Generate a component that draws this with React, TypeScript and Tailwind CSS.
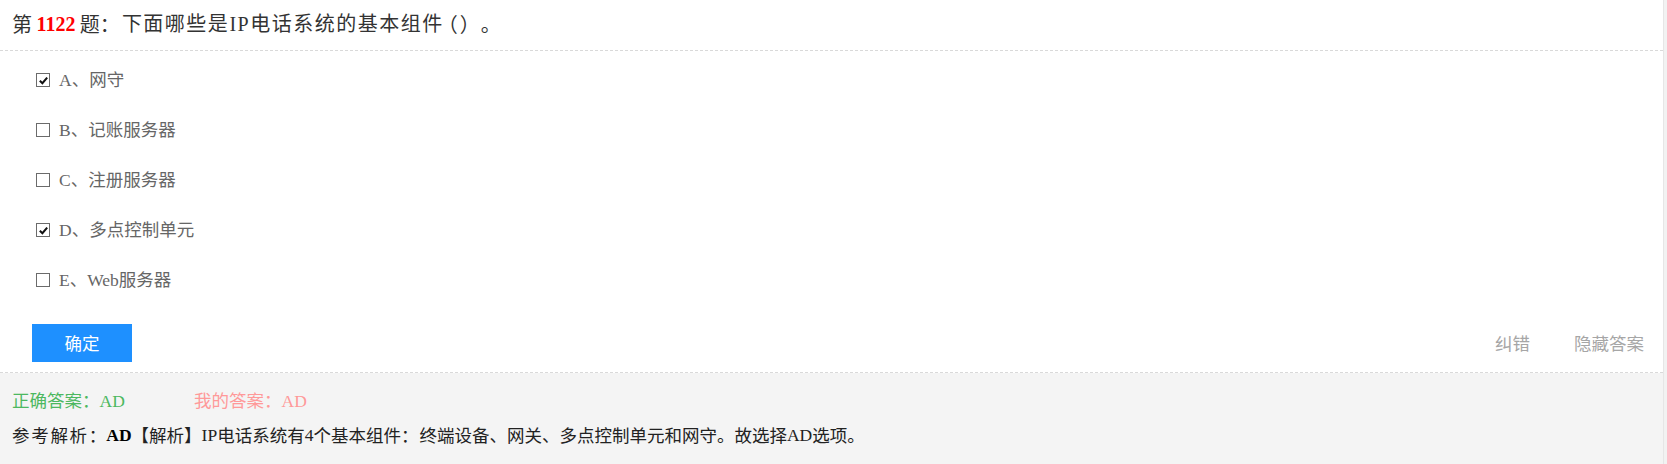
const serifCjk = "font-['Liberation_Serif','Noto_Sans_CJK_SC',serif]"
const cjk = "font-['Noto_Sans_CJK_SC',sans-serif]"
const latin = "font-['Liberation_Serif',serif]"

const options = [
  { key: 'A', text: '网守', checked: true },
  { key: 'B', text: '记账服务器', checked: false },
  { key: 'C', text: '注册服务器', checked: false },
  { key: 'D', text: '多点控制单元', checked: true },
  { key: 'E', text: 'Web服务器', checked: false },
]

function CheckBox({ checked }: { checked: boolean }) {
  return (
    <span className="flex h-[14px] w-[14px] items-center justify-center border border-[#6b6b6b] bg-white">
      {checked && (
        <svg viewBox="0 0 12 12" className="h-[11px] w-[11px]">
          <path d="M2 6.2 L4.8 9 L10 2.8" fill="none" stroke="#111" strokeWidth="2.2" />
        </svg>
      )}
    </span>
  )
}

export default function App() {
  return (
    <div className={`flex h-[464px] w-[1667px] bg-[#f2f2f2] ${serifCjk}`}>
      <div className="flex w-[1664px] flex-col border-r border-[#e6e6e6]">
        <div className={`flex h-[51px] items-center border-b border-dashed border-[#d9d9d9] bg-white pb-[3px] pl-3 text-[20px] text-[#333] ${cjk}`}>
          <span>第&nbsp;</span>
          <span className={`font-bold text-[#ff0000] ${latin}`}>1122</span>
          <span>&nbsp;题：</span>
          <span className="ml-[2px] tracking-[1.5px]">
            下面哪些是<span className={latin}>IP</span>电话系统的基本组件
          </span>
          <span className="-ml-[6px]">（</span>
          <span className="ml-[2px]">）</span>
          <span className="ml-[1px]">。</span>
        </div>

        <div className="bg-white">
          <div className="flex flex-col pl-9 pt-[4px]">
            {options.map((o) => (
              <div key={o.key} className="flex h-[50px] items-center gap-[9px] text-[17.5px] text-[#666]">
                <CheckBox checked={o.checked} />
                <span>
                  {o.key}、{o.text}
                </span>
              </div>
            ))}
          </div>

          <div className="mt-[19px] flex items-center justify-between border-b border-dashed border-[#d9d9d9] pb-[10px] pl-8 pr-[19px]">
            <button className={`h-[38px] w-[100px] bg-[#1e90ff] text-[17.5px] text-white ${cjk}`}>确定</button>
            <div className={`flex gap-[44px] text-[17.5px] text-[#a6a6a6] ${cjk}`}>
              <span>纠错</span>
              <span>隐藏答案</span>
            </div>
          </div>
        </div>

        <div className={`flex-1 bg-[#f4f4f4] pl-3 pt-[15px] text-[17.5px] ${cjk}`}>
          <div className="flex h-[26px] items-center">
            <span className="w-[182px] text-[#4cb860]">
              正确答案：<span className={latin}>AD</span>
            </span>
            <span className="text-[#ff9999]">
              我的答案：<span className={latin}>AD</span>
            </span>
          </div>
          <div className="mt-[8px] flex h-[26px] items-center text-[#222]">
            <span className="tracking-[1.7px]">参考解析</span>
            <span>：</span>
            <span className={`font-bold text-black ${latin}`}>AD</span>
            <span>【解析】</span>
            <span className={latin}>IP</span>
            <span>电话系统有</span>
            <span className={latin}>4</span>
            <span>个基本组件：</span>
            <span className="ml-[1px]">终端设备、网关、多点控制单元和网守。故选择</span>
            <span className={latin}>AD</span>
            <span>选项。</span>
          </div>
        </div>
      </div>
    </div>
  )
}
